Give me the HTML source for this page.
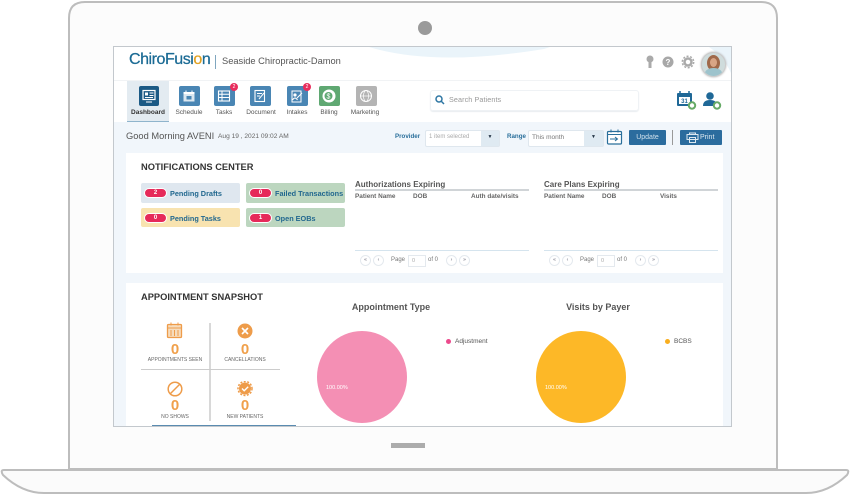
<!DOCTYPE html>
<html><head><meta charset="utf-8">
<style>
html,body{margin:0;padding:0;width:850px;height:495px;overflow:hidden;background:#fff;font-family:"Liberation Sans",sans-serif}
.a{position:absolute;white-space:nowrap}
#s{left:114px;top:47px;width:617px;height:379px;background:#fff;overflow:hidden;position:absolute}
#c{position:absolute;left:-114px;top:-47px;width:850px;height:495px;filter:blur(.35px)}
.nl{font-size:6.5px;color:#555;transform:translateX(-50%);top:109px}
.ic{width:21px;height:20px;border-radius:2px;top:86px;background:#4a86b4}
.ic svg{position:absolute;left:0;top:0;width:20px;height:20px}
.bd{width:8px;height:8px;border-radius:50%;background:#e82d5c;color:#fff;font-size:5px;line-height:8px;text-align:center;top:83px}
.chip{height:20px;border-radius:2px}
.pill{width:21px;height:8px;border-radius:5px;background:#e62a5a;border:1px solid #fff;color:#fff;font-size:6px;font-weight:bold;line-height:9px;text-align:center}
.cl{font-size:7.3px;font-weight:bold;color:#22688f}
.h{font-size:8px;font-weight:bold;color:#555}
.th{font-size:6.4px;font-weight:bold;color:#666}
.pb{width:9px;height:9px;border-radius:50%;border:1px solid #e4e9ee;font-size:5px;line-height:9px;text-align:center;color:#667;top:255px}
.pt{font-size:6px;color:#777;top:257px}
.n{font-size:15px;font-weight:bold;color:#f0a04b;transform:translateX(-50%)}
.lb{font-size:5px;color:#666;transform:translateX(-50%)}
.t{font-size:9.3px;font-weight:bold;color:#333}
</style></head><body>

<svg class="a" style="left:0;top:0" width="850" height="495">
<path d="M69 469V18Q69 2 85 2H761Q777 2 777 18V469Z" fill="#fcfcfc" stroke="#bdbdbd" stroke-width="2"/>
<path d="M4 470H846Q850 470 847 475Q828 493 806 493H44Q22 493 3 475Q0 470 4 470Z" fill="#fbfbfb" stroke="#bdbdbd" stroke-width="2"/>
<circle cx="425" cy="28" r="7" fill="#9a9a9a"/>
<rect x="391" y="443" width="34" height="5" fill="#acacac"/>
<rect x="113.500" y="46.500" width="618" height="380" fill="none" stroke="#c3c8cd" stroke-width="1"/>
</svg>

<div id="s"><div id="c">
<svg class="a" style="left:114px;top:47px" width="617" height="30"><path d="M255 0Q320 20 430 2L436 0Z" fill="#eaf4fa"/><path d="M595 0Q610 10 617 26V0Z" fill="#eaf4fa"/></svg>

<div class="a" style="left:129px;top:51px;font-size:16px;color:#1a6a94;letter-spacing:-.45px;-webkit-text-stroke:.25px #1a6a94">ChiroFusi<span style="color:#e0a020;-webkit-text-stroke:.25px #e0a020">o</span>n</div>
<div class="a" style="left:215px;top:55px;width:1px;height:14px;background:#7fa6bf"></div>
<div class="a" style="left:222px;top:56px;font-size:9.300px;color:#555">Seaside Chiropractic-Damon</div>

<svg class="a" style="left:644px;top:52px" width="54" height="20">
<circle cx="6" cy="7" r="3.500" fill="#aaa"/><rect x="4.500" y="10" width="3" height="6" fill="#aaa"/>
<circle cx="24" cy="10" r="5.500" fill="#a8a8a8"/><text x="24" y="13" font-size="8" font-weight="bold" fill="#fff" text-anchor="middle" font-family="Liberation Sans">?</text>
<circle cx="44" cy="10" r="3.500" fill="none" stroke="#aaa" stroke-width="2.500"/><circle cx="44" cy="10" r="5.700" fill="none" stroke="#aaa" stroke-width="1.500" stroke-dasharray="2 1.600"/>
</svg>
<div class="a" style="left:701px;top:52px;width:23px;height:23px;border-radius:50%;background:#cfdcdc;border:1px solid #ccc;overflow:hidden;box-shadow:0 0 2px #aaa">
<div class="a" style="left:5px;top:2px;width:13px;height:16px;border-radius:50%;background:#a0694a"></div>
<div class="a" style="left:8px;top:5px;width:7px;height:9px;border-radius:50%;background:#d9a585"></div>
<div class="a" style="left:3px;top:15px;width:17px;height:10px;border-radius:50%;background:#9dc3cc"></div>
</div>

<div class="a" style="left:114px;top:80px;width:617px;height:1px;background:#f1f3f5"></div>
<div class="a" style="left:127px;top:81px;width:42px;height:40px;background:#e3ebf1;border-bottom:1px solid #8fb4cc"></div>

<div class="a ic" style="left:139px;width:20px;background:#1b5a85"><svg viewBox="0 0 20 20"><rect x="4" y="4.500" width="12" height="9" fill="none" stroke="#fff" stroke-width="1.200"/><rect x="6" y="6.500" width="3" height="3" fill="#fff"/><path d="M10.500 7h4M10.500 9.500h4M6 11.500h8M7 16h6" stroke="#fff"/></svg></div>
<div class="a ic" style="left:179px;background:#4a86b4"><svg viewBox="0 0 20 20"><rect x="4.500" y="6" width="11" height="9.500" fill="#dbe7f0"/><rect x="4.500" y="6" width="11" height="2" fill="#fff"/><path d="M7 4.500v2M13 4.500v2" stroke="#fff"/><rect x="7.500" y="10" width="5" height="3.500" fill="#4a86b4"/></svg></div>
<div class="a ic" style="left:214px;background:#4a86b4"><svg viewBox="0 0 20 20"><rect x="4.500" y="5" width="11" height="10" fill="none" stroke="#fff" stroke-width="1.100"/><path d="M4.500 8.200h11M4.500 11.500h11M8 5v10" stroke="#fff"/></svg></div>
<div class="a bd" style="left:230px">2</div>
<div class="a ic" style="left:250px;background:#4a86b4"><svg viewBox="0 0 20 20"><rect x="5" y="4.500" width="9.500" height="11" fill="none" stroke="#fff" stroke-width="1.100"/><path d="M7 7.500h5M7 10h3M9 13l5-6" stroke="#fff"/></svg></div>
<div class="a ic" style="left:287px;background:#4a86b4"><svg viewBox="0 0 20 20"><rect x="5" y="5" width="9" height="11" fill="none" stroke="#fff"/><circle cx="8" cy="9" r="1.600" fill="#fff"/><path d="M5.500 14q2.500-4 5 0M10 12l5-5" stroke="#fff" fill="none"/></svg></div>
<div class="a bd" style="left:303px">2</div>
<div class="a ic" style="left:319px;background:#5fa872"><svg viewBox="0 0 20 20"><circle cx="10" cy="10" r="6.500" fill="#fff"/><circle cx="9.500" cy="10" r="4" fill="#5fa872"/><text x="9.500" y="12.500" font-size="7" fill="#fff" text-anchor="middle" font-family="Liberation Sans">$</text></svg></div>
<div class="a ic" style="left:356px;background:#b4b4b4"><svg viewBox="0 0 20 20"><circle cx="10" cy="10" r="5.500" fill="none" stroke="#fff"/><ellipse cx="10" cy="10" rx="2.500" ry="5.500" fill="none" stroke="#fff" stroke-width=".7"/><path d="M4.500 10h11" stroke="#fff" stroke-width=".7"/></svg></div>

<div class="a nl" style="left:148px;font-weight:bold;color:#333">Dashboard</div>
<div class="a nl" style="left:189px">Schedule</div>
<div class="a nl" style="left:224px">Tasks</div>
<div class="a nl" style="left:261px">Document</div>
<div class="a nl" style="left:297px">Intakes</div>
<div class="a nl" style="left:329px">Billing</div>
<div class="a nl" style="left:365px">Marketing</div>

<div class="a" style="left:430px;top:90px;width:207px;height:19px;border:1px solid #eff2f5;border-radius:3px;box-shadow:0 1px 1px #e9edf0"></div>
<svg class="a" style="left:434px;top:94px" width="12" height="12"><circle cx="5" cy="5" r="3" fill="none" stroke="#2e76a3" stroke-width="1.500"/><path d="M7 7l3 3" stroke="#2e76a3" stroke-width="1.500"/></svg>
<div class="a" style="left:449px;top:95px;font-size:7.200px;color:#999;letter-spacing:.1px">Search Patients</div>

<svg class="a" style="left:675px;top:90px" width="50" height="22">
<rect x="2" y="3" width="15" height="13" rx="1" fill="#1f6897"/><rect x="4" y="7" width="11" height="7" fill="#fff"/><path d="M5 1v3M14 1v3" stroke="#1f6897" stroke-width="1.500"/><text x="9.500" y="13" font-size="6" font-weight="bold" fill="#1f6897" text-anchor="middle" font-family="Liberation Sans">31</text>
<circle cx="17" cy="15.500" r="3.200" fill="#fff" stroke="#66aa66" stroke-width="2"/>
<circle cx="35" cy="6" r="3.800" fill="#1f6897"/><path d="M28 16q0-6 7-6t7 6z" fill="#1f6897"/><circle cx="42" cy="15.500" r="3.200" fill="#fff" stroke="#66aa66" stroke-width="2"/>
</svg>

<div class="a" style="left:114px;top:122px;width:617px;height:305px;background:#f1f6fb"></div>

<div class="a" style="left:126px;top:131px;font-size:9.300px;color:#555">Good Morning AVENI</div>
<div class="a" style="left:218px;top:133px;font-size:6.600px;color:#666">Aug 19 , 2021 09:02 AM</div>
<div class="a" style="left:395px;top:133px;font-size:6.200px;font-weight:bold;color:#2a6f9b">Provider</div>
<div class="a" style="left:425px;top:130px;width:73px;height:15px;background:#fff;border:1px solid #dfe7ee;border-radius:2px"></div>
<div class="a" style="left:481px;top:131px;width:18px;height:15px;background:#dfeaf2;font-size:5px;line-height:13px;text-align:center;color:#234">▼</div>
<div class="a" style="left:429px;top:134px;font-size:6px;color:#aaa">1 item selected</div>
<div class="a" style="left:507px;top:133px;font-size:6.200px;font-weight:bold;color:#2a6f9b">Range</div>
<div class="a" style="left:528px;top:130px;width:74px;height:15px;background:#fff;border:1px solid #dfe7ee;border-radius:2px"></div>
<div class="a" style="left:584px;top:131px;width:19px;height:15px;background:#dfeaf2;font-size:5px;line-height:13px;text-align:center;color:#234">▼</div>
<div class="a" style="left:532px;top:134px;font-size:6.500px;color:#777">This month</div>
<svg class="a" style="left:606px;top:128px" width="17" height="18"><rect x="1.500" y="3.500" width="14" height="12.500" rx="1" fill="#fff" stroke="#2a6f9b" stroke-width="1.200"/><path d="M1.500 6.500h14M5 1.500v3M12 1.500v3M4 11h7M9 9l2.500 2-2.500 2" stroke="#2a6f9b" fill="none"/></svg>
<div class="a" style="left:629px;top:130px;width:37px;height:15px;background:#2b6c9e;border-radius:1px;color:#cfe0ec;font-size:7px;line-height:15px;text-align:center">Update</div>
<div class="a" style="left:672px;top:130px;width:1px;height:15px;background:#999"></div>
<div class="a" style="left:680px;top:130px;width:42px;height:15px;background:#2b6c9e;border-radius:1px;color:#dce8f0;font-size:7px;line-height:15px;padding-left:20px;box-sizing:border-box">Print</div>
<svg class="a" style="left:686px;top:132px" width="13" height="12"><path d="M1 2.500h11v5H1zM3.500 5.500h6v5h-6zM3.500 2.500V1h6v1.500" fill="none" stroke="#dce8f0"/></svg>

<div class="a" style="left:126px;top:153px;width:597px;height:120px;background:#fff"></div>
<div class="a t" style="left:141px;top:162px">NOTIFICATIONS CENTER</div>

<div class="a chip" style="left:141px;top:183px;width:99px;background:#dfe7ef"></div>
<div class="a chip" style="left:246px;top:183px;width:99px;background:#bcd6bf"></div>
<div class="a chip" style="left:141px;top:208px;width:99px;height:19px;background:#f8e3b0"></div>
<div class="a chip" style="left:246px;top:208px;width:99px;height:19px;background:#bcd6bf"></div>
<div class="a pill" style="left:144px;top:188px">2</div><div class="a cl" style="left:170px;top:189px">Pending Drafts</div>
<div class="a pill" style="left:249px;top:188px">0</div><div class="a cl" style="left:275px;top:189px">Failed Transactions</div>
<div class="a pill" style="left:144px;top:213px">0</div><div class="a cl" style="left:170px;top:214px">Pending Tasks</div>
<div class="a pill" style="left:249px;top:213px">1</div><div class="a cl" style="left:275px;top:214px">Open EOBs</div>

<div class="a h" style="left:355px;top:180px">Authorizations Expiring</div>
<div class="a" style="left:355px;top:189px;width:174px;height:2px;background:#d0d4d7"></div>
<div class="a th" style="left:355px;top:193px">Patient Name</div>
<div class="a th" style="left:413px;top:193px">DOB</div>
<div class="a th" style="left:471px;top:193px">Auth date/visits</div>
<div class="a" style="left:355px;top:250px;width:174px;height:1px;background:#d5e4ee"></div>
<div class="a pb" style="left:360px">«</div><div class="a pb" style="left:373px">‹</div>
<div class="a pt" style="left:391px">Page</div>
<div class="a" style="left:408px;top:255px;width:13px;height:10px;border:1px solid #e4e9ee;font-size:5.500px;color:#aaa;line-height:10px;padding-left:3px">0</div>
<div class="a pt" style="left:428px">of 0</div>
<div class="a pb" style="left:446px">›</div><div class="a pb" style="left:459px">»</div>

<div class="a h" style="left:544px;top:180px">Care Plans Expiring</div>
<div class="a" style="left:544px;top:189px;width:174px;height:2px;background:#d0d4d7"></div>
<div class="a th" style="left:544px;top:193px">Patient Name</div>
<div class="a th" style="left:602px;top:193px">DOB</div>
<div class="a th" style="left:660px;top:193px">Visits</div>
<div class="a" style="left:544px;top:250px;width:174px;height:1px;background:#d5e4ee"></div>
<div class="a pb" style="left:549px">«</div><div class="a pb" style="left:562px">‹</div>
<div class="a pt" style="left:580px">Page</div>
<div class="a" style="left:597px;top:255px;width:13px;height:10px;border:1px solid #e4e9ee;font-size:5.500px;color:#aaa;line-height:10px;padding-left:3px">0</div>
<div class="a pt" style="left:617px">of 0</div>
<div class="a pb" style="left:635px">›</div><div class="a pb" style="left:648px">»</div>

<div class="a" style="left:126px;top:283px;width:597px;height:144px;background:#fff"></div>
<div class="a t" style="left:141px;top:292px">APPOINTMENT SNAPSHOT</div>

<div class="a" style="left:209px;top:323px;width:2px;height:98px;background:#d8d8d8"></div>
<div class="a" style="left:141px;top:369px;width:139px;height:1px;background:#ccc"></div>

<svg class="a" style="left:166px;top:322px" width="24" height="18"><rect x="1.500" y="2.500" width="14" height="13" rx="1" fill="#f6dcbd" stroke="#ee9c4a" stroke-width="1.300"/><path d="M5 .5v3M12 .5v3M1.500 6h14M5 8v6M8.500 8v6M12 8v6" stroke="#ee9c4a"/></svg>
<svg class="a" style="left:237px;top:323px" width="18" height="18"><circle cx="8" cy="8" r="7.500" fill="#ee9c4a"/><path d="M5 5l6 6M11 5l-6 6" stroke="#fff" stroke-width="1.600"/></svg>
<svg class="a" style="left:166px;top:381px" width="18" height="18"><circle cx="9" cy="8" r="6.800" fill="none" stroke="#ee9c4a" stroke-width="1.500"/><path d="M4.500 12.500l9-9" stroke="#ee9c4a" stroke-width="1.500"/></svg>
<svg class="a" style="left:237px;top:381px" width="18" height="18"><circle cx="8" cy="7.500" r="6" fill="#ee9c4a"/><circle cx="8" cy="7.500" r="7" fill="none" stroke="#ee9c4a" stroke-width="1.500" stroke-dasharray="2 1.500"/><path d="M5 7.500l2.200 2.200 4-4" fill="none" stroke="#fff" stroke-width="1.400"/></svg>

<div class="a n" style="left:175px;top:341px">0</div>
<div class="a n" style="left:245px;top:341px">0</div>
<div class="a n" style="left:175px;top:397px">0</div>
<div class="a n" style="left:245px;top:397px">0</div>
<div class="a lb" style="left:175px;top:357px">APPOINTMENTS SEEN</div>
<div class="a lb" style="left:245px;top:357px">CANCELLATIONS</div>
<div class="a lb" style="left:175px;top:414px">NO SHOWS</div>
<div class="a lb" style="left:245px;top:414px">NEW PATIENTS</div>

<div class="a" style="left:391px;top:302px;transform:translateX(-50%);font-size:9px;font-weight:bold;color:#555">Appointment Type</div>
<div class="a" style="left:598px;top:302px;transform:translateX(-50%);font-size:9px;font-weight:bold;color:#555">Visits by Payer</div>

<div class="a" style="left:317px;top:331px;width:90px;height:92px;border-radius:50%;background:#f48fb4"></div>
<div class="a" style="left:326px;top:385px;font-size:5.500px;color:#fff">100.00%</div>
<div class="a" style="left:536px;top:331px;width:90px;height:92px;border-radius:50%;background:#fdb827"></div>
<div class="a" style="left:545px;top:385px;font-size:5.500px;color:#fff">100.00%</div>

<div class="a" style="left:445.500px;top:339px;width:5px;height:5px;border-radius:50%;background:#ec4a8c"></div>
<div class="a" style="left:455px;top:338px;font-size:6.500px;color:#555">Adjustment</div>
<div class="a" style="left:664.500px;top:339px;width:5px;height:5px;border-radius:50%;background:#f9ae1e"></div>
<div class="a" style="left:674px;top:338px;font-size:6.500px;color:#555">BCBS</div>

<div class="a" style="left:152px;top:425px;width:144px;height:1px;background:#5a8bb0"></div>
</div></div>
</body></html>
